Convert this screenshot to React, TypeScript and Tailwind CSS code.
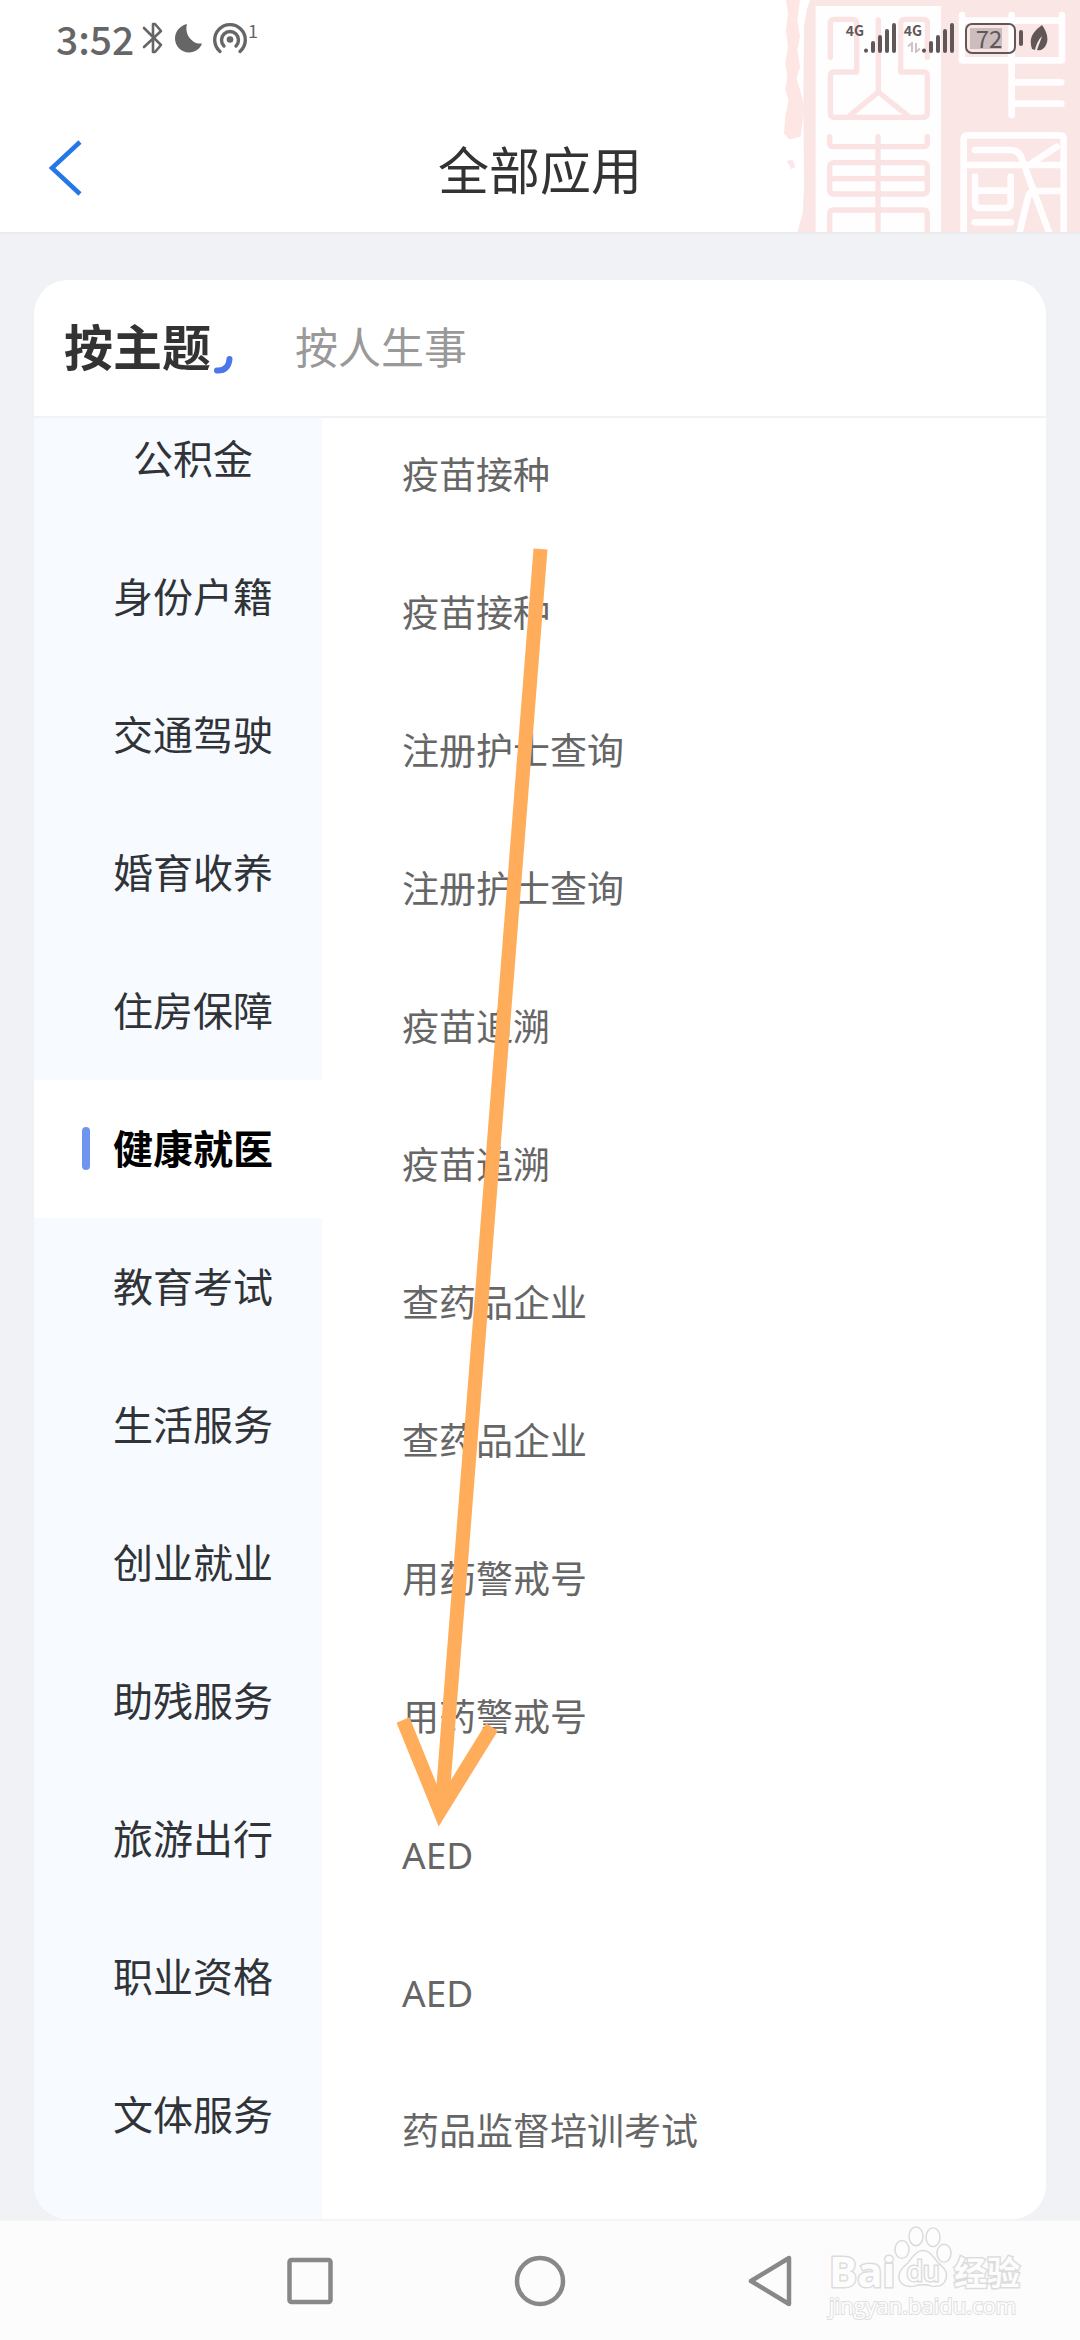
import React from "react";

const topics = [
  "公积金",
  "身份户籍",
  "交通驾驶",
  "婚育收养",
  "住房保障",
  "健康就医",
  "教育考试",
  "生活服务",
  "创业就业",
  "助残服务",
  "旅游出行",
  "职业资格",
  "文体服务",
];

const services = [
  "疫苗接种",
  "疫苗接种",
  "注册护士查询",
  "注册护士查询",
  "疫苗追溯",
  "疫苗追溯",
  "查药品企业",
  "查药品企业",
  "用药警戒号",
  "用药警戒号",
  "AED",
  "AED",
  "药品监督培训考试",
];

function SealArt() {
  return (
    <svg
      className="pointer-events-none absolute top-0 right-0 h-full w-[320px]"
      viewBox="0 0 960 696"
      fill="none"
      aria-hidden="true"
    >
      <path d="M150 0H960V696H112L128 640L132 560L130 300L132 80L140 30Z" fill="#fbe6e6" />
      <path
        d="M78 0H120L112 60L120 110L112 150L120 200L110 235L126 290L132 330L122 410L88 418L72 400L76 350L86 300L76 270L82 230L76 190L84 140L78 90L84 40Z"
        fill="#fde6e3"
      />
      <path d="M80 482L98 480L106 500L94 508Z" fill="#fbe6ea" />
      <rect x="167" y="18" width="376" height="678" fill="#fffefe" />
      <g stroke="#fbe2e3" strokeWidth="16" strokeLinecap="round" strokeLinejoin="round">
        <path d="M211 172V70Q211 58 223 58H276Q290 58 290 72V216H223Q211 216 211 228V338Q211 352 225 352H488Q502 352 502 338V228Q502 216 490 216H422V72Q422 58 436 58H490Q502 58 502 70V172" />
        <path d="M355 60V276L270 346M355 276L442 346" />
        <path d="M209 410V430Q209 440 220 440H490Q502 440 502 430V410" />
        <rect x="209" y="488" width="293" height="94" rx="12" />
        <path d="M209 536H502M354 410V690" />
        <path d="M209 696V644Q209 630 222 630H490Q502 630 502 644V696" />
      </g>
      <g stroke="#fffdfd" strokeWidth="20" strokeLinecap="round" strokeLinejoin="round">
        <path d="M606 45V181H906V45M606 62H906M755 45V345M755 247H904M755 311H904" />
        <path d="M611 710V418Q611 406 623 406H899Q911 406 911 418V710" />
        <path d="M645 450H750Q778 450 786 478L868 700M622 495H900M890 440L806 496M900 573H826Q806 573 802 600L778 700" />
        <path d="M645 530V608Q645 624 661 624H736Q752 624 752 608V530M650 572H746M644 667H752" />
      </g>
    </svg>
  );
}

function SignalBars() {
  return (
    <svg className="h-[30px] w-[32px]" viewBox="0 0 32 30" aria-hidden="true">
      <g stroke="#615759" strokeWidth="4" strokeLinecap="round">
        <path d="M2 27.6V27.8M9 20V28M16 14V28M23 8V28M30 2V28" />
      </g>
    </svg>
  );
}

function StatusBar() {
  return (
    <div className="relative flex h-[76px] items-center justify-between pr-[32px] pl-[56px] text-[#666]">
      <div className="flex items-center">
        <span className="w-[82px] text-[39px] leading-[48px] font-medium">3:52</span>
        <svg className="ml-[4px] h-[34px] w-[22px]" viewBox="0 0 22 34" fill="none" stroke="#666" strokeWidth="2.6" strokeLinejoin="round" strokeLinecap="round" aria-hidden="true">
          <path d="M2 7L19 24L13 31L11 31V3L13 3L19 10L2 26" />
        </svg>
        <svg className="ml-[10px] h-[30px] w-[29px]" viewBox="0 0 29 30" aria-hidden="true">
          <path d="M13 1C11 8 14 15 20 19C22.500 20.500 25 20.800 28 20.500C26 26 21 29.500 15 29.500C7 29.500 1 23 1 15.500C1 8.500 6 2.500 13 1Z" fill="#666" />
        </svg>
        <svg className="ml-[9px] h-[32px] w-[36px]" viewBox="0 0 36 32" fill="none" stroke="#666" strokeWidth="3.4" strokeLinecap="round" aria-hidden="true">
          <path d="M8 29.500A15.300 15.300 0 1 1 28 29.500" />
          <path d="M12 24A8.500 8.500 0 1 1 24 24" />
          <circle cx="18" cy="17.500" r="3.300" fill="#666" stroke="none" />
        </svg>
        <span className="mb-[16px] text-[18px] leading-[18px]">1</span>
      </div>
      <div className="flex items-center text-[#615759]">
        <div className="flex items-start">
          <span className="flex w-[17px] justify-end text-[14px] leading-[14px] font-bold">4G</span>
          <SignalBars />
        </div>
        <div className="ml-[9px] flex items-start">
          <div className="flex w-[17px] flex-col items-end gap-[5px]">
            <span className="text-[14px] leading-[14px] font-bold">4G</span>
            <svg className="h-[11px] w-[15px]" viewBox="0 0 15 11" fill="none" stroke="#cfc3c6" strokeWidth="2" aria-hidden="true">
              <path d="M1 4.500L5 1V10M9 1V10L13 6.500" />
            </svg>
          </div>
          <SignalBars />
        </div>
        <div className="ml-[11px] flex h-[31px] w-[51px] items-center rounded-[7px] border-2 border-[#615759] p-[3px]">
          <div className="flex h-full w-[32px] items-center justify-center bg-[#cbbcbe] pl-[6px] text-[24px] leading-[24px]">72</div>
        </div>
        <div className="ml-[3px] h-[16px] w-[4px] rounded-full bg-[#615759]" />
        <svg className="ml-[7px] h-[27px] w-[18px]" viewBox="0 0 18 27" aria-hidden="true">
          <path d="M12 0C17 7 19 14 16 20C14 24 11 26 7 25C9 19 11 15 12 11C8 15 6 20 5 25L2 24C-1 15 1 8 12 0Z" fill="#615759" />
        </svg>
      </div>
    </div>
  );
}

function GestureArrow() {
  return (
    <svg
      className="pointer-events-none absolute top-[548px] left-[396px] h-[1284px] w-[156px]"
      viewBox="396 548 156 1284"
      fill="none"
      stroke="#ffad5b"
      strokeWidth="14"
      aria-hidden="true"
    >
      <path d="M540.500 549L442 1804" />
      <path d="M403 1720L440 1811L492 1727" strokeMiterlimit="8" />
    </svg>
  );
}

function Watermark() {
  return (
    <div className="pointer-events-none absolute right-[56px] bottom-[18px] flex w-[195px] flex-col text-[#fdfdfd]">
      <div className="flex items-end">
        <span className="w-[65px] font-['Open_Sans',sans-serif] text-[42px] leading-[34px] font-bold [paint-order:stroke_fill] [-webkit-text-stroke:3px_#dcdcdc]">Bai</span>
        <div className="relative flex h-[62px] w-[58px] items-end justify-center">
          <svg className="absolute inset-0 h-full w-full" viewBox="0 0 58 66" preserveAspectRatio="none" fill="#fdfdfd" stroke="#dadada" strokeWidth="1.5" aria-hidden="true">
            <ellipse cx="8" cy="25" rx="7" ry="9.500" />
            <ellipse cx="22" cy="11" rx="7" ry="10" />
            <ellipse cx="39" cy="12" rx="7" ry="10" />
            <ellipse cx="50" cy="29" rx="7" ry="9.500" />
            <path d="M29 26C36 26 39 33 44 39C50 45 54 48 52 56C50 64 44 65 38 64C32 62 26 62 20 64C14 65 7 64 5 56C4 48 9 44 14 39C19 33 22 26 29 26Z" />
          </svg>
          <span className="relative font-['Open_Sans',sans-serif] text-[27px] leading-[34px] [paint-order:stroke_fill] [-webkit-text-stroke:3px_#dcdcdc]">du</span>
        </div>
        <span className="ml-[2px] text-[33px] leading-[34px] font-bold [paint-order:stroke_fill] [-webkit-text-stroke:3px_#dcdcdc]">经验</span>
      </div>
      <span className="font-['Open_Sans',sans-serif] text-[22px] leading-[34px] whitespace-nowrap [paint-order:stroke_fill] [-webkit-text-stroke:2px_#e0e0e0]">jingyan.baidu.com</span>
    </div>
  );
}

export default function App() {
  return (
    <div className="relative flex min-h-screen flex-col overflow-hidden bg-[#f0f2f6] font-['Noto_Sans_CJK_SC',sans-serif]">
      <header className="relative border-b-2 border-[#ebebec] bg-white">
        <SealArt />
        <StatusBar />
        <div className="relative grid h-[156px] grid-cols-[1fr_auto_1fr] items-center pt-[28px]">
          <button type="button" aria-label="返回" className="flex h-[90px] w-[130px] items-center pl-[48px]">
            <svg className="h-[56px] w-[34px]" viewBox="0 0 34 56" fill="none" stroke="#2478e5" strokeWidth="4.500" aria-hidden="true">
              <path d="M32 2L4 28L32 54" />
            </svg>
          </button>
          <h1 className="text-[51px] leading-[60px] text-[#333]">全部应用</h1>
        </div>
      </header>

      <main className="mx-[34px] mt-[46px] flex-1 overflow-hidden rounded-[34px] bg-white">
        <div className="flex h-[138px] items-center border-b-2 border-[#f0f2f5] pb-[6px] pl-[30px]">
          <button type="button" className="relative text-[49px] leading-[60px] font-bold text-[#333]">
            按主题
            <svg className="absolute top-[40px] left-[149px] h-[20px] w-[22px]" viewBox="0 0 22 20" fill="none" stroke="#4a78ea" strokeWidth="6" strokeLinecap="round" aria-hidden="true">
              <path d="M4 15.500C12 16 16 11 16.500 4" />
            </svg>
          </button>
          <button type="button" className="ml-[84px] text-[43px] leading-[60px] text-[#999]">
            按人生事
          </button>
        </div>
        <div className="flex overflow-hidden">
          <nav className="w-[288px] shrink-0 bg-[#f7fbff] pb-[35px]">
            <ul className="-mt-[28px]">
              {topics.map((topic) => {
                const active = topic === "健康就医";
                return (
                  <li key={topic}>
                    <button
                      type="button"
                      aria-current={active ? "true" : undefined}
                      className={
                        active
                          ? "relative h-[138px] w-full bg-white pr-[2px] pb-[4px] pl-[32px] text-[40px] font-bold text-black"
                          : "h-[138px] w-full pr-[2px] pb-[4px] pl-[32px] text-[40px] text-[#303337]"
                      }
                    >
                      {active && (
                        <span className="absolute top-[47px] left-[48px] h-[43px] w-[8px] rounded-full bg-[#7095f0]" />
                      )}
                      {topic}
                    </button>
                  </li>
                );
              })}
            </ul>
          </nav>
          <ul className="-mt-[12px] min-w-0 flex-1">
            {services.map((service, index) => (
              <li key={index}>
                <a href="#service" className="flex h-[138px] items-center pl-[80px] font-['Noto_Sans','Noto_Sans_CJK_SC',sans-serif] text-[37px] text-[#666]">
                  {service}
                </a>
              </li>
            ))}
          </ul>
        </div>
      </main>

      <footer className="relative h-[121px] border-t-2 border-[#f4f4f5] bg-[#fcfcfc]">
        <div className="mx-auto grid h-full w-[64%] grid-cols-3 place-items-center">
          <button type="button" aria-label="最近任务">
            <svg className="h-[52px] w-[52px]" viewBox="0 0 52 52" fill="none" stroke="#888" strokeWidth="4.500" aria-hidden="true">
              <rect x="5.500" y="5" width="41" height="42" rx="2" />
            </svg>
          </button>
          <button type="button" aria-label="主屏幕">
            <svg className="h-[52px] w-[52px]" viewBox="0 0 52 52" fill="none" stroke="#888" strokeWidth="4.500" aria-hidden="true">
              <circle cx="26" cy="26" r="23" />
            </svg>
          </button>
          <button type="button" aria-label="返回上一页">
            <svg className="h-[52px] w-[52px]" viewBox="0 0 52 52" fill="none" stroke="#888" strokeWidth="4.500" strokeLinejoin="round" aria-hidden="true">
              <path d="M45 3V49L7 26Z" />
            </svg>
          </button>
        </div>
        <Watermark />
      </footer>

      <GestureArrow />
    </div>
  );
}
